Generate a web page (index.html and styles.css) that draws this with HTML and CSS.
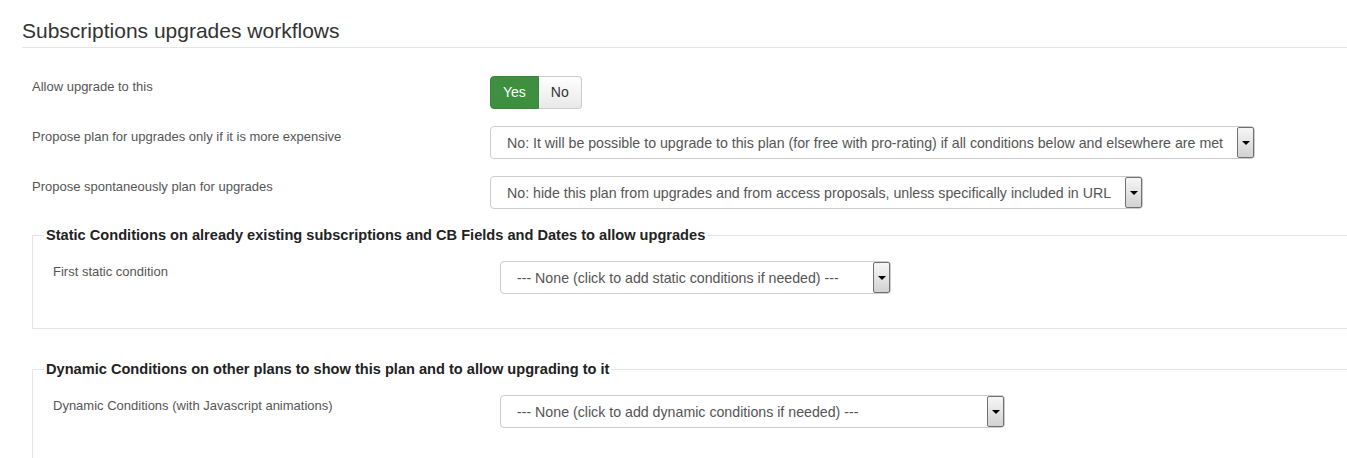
FILE: index.html
```html
<!DOCTYPE html>
<html>
<head>
<meta charset="utf-8">
<link rel="stylesheet" href="styles.css">
</head>
<body>
<div class="page">
  <h2 class="title">Subscriptions upgrades workflows</h2>
  <div class="form">
    <div class="row">
      <div class="label">Allow upgrade to this</div>
      <div class="toggle">
        <span class="btn btn-yes">Yes</span><span class="btn btn-no">No</span>
      </div>
    </div>
    <div class="row">
      <div class="label">Propose plan for upgrades only if it is more expensive</div>
      <div class="select select-expensive"><span class="select-text">No: It will be possible to upgrade to this plan (for free with pro-rating) if all conditions below and elsewhere are met</span><span class="select-arrow"></span></div>
    </div>
    <div class="row">
      <div class="label">Propose spontaneously plan for upgrades</div>
      <div class="select select-spontaneous"><span class="select-text">No: hide this plan from upgrades and from access proposals, unless specifically included in URL</span><span class="select-arrow"></span></div>
    </div>

    <fieldset class="group">
      <legend class="group-title">Static Conditions on already existing subscriptions and CB Fields and Dates to allow upgrades</legend>
      <div class="row row-inner">
        <div class="label label-inner">First static condition</div>
        <div class="select select-static"><span class="select-text">--- None (click to add static conditions if needed) ---</span><span class="select-arrow"></span></div>
      </div>
    </fieldset>

    <fieldset class="group group-second">
      <legend class="group-title">Dynamic Conditions on other plans to show this plan and to allow upgrading to it</legend>
      <div class="row row-inner">
        <div class="label label-inner">Dynamic Conditions (with Javascript animations)</div>
        <div class="select select-dynamic"><span class="select-text">--- None (click to add dynamic conditions if needed) ---</span><span class="select-arrow"></span></div>
      </div>
    </fieldset>
  </div>
</div>
</body>
</html>
```
FILE: styles.css
```css
html, body {
  margin: 0;
  padding: 0;
  background: #ffffff;
  overflow: hidden;
}

body {
  font-family: "Liberation Sans", Arial, Helvetica, sans-serif;
  color: #333333;
}

.page {
  padding: 20px 0 0 22px;
}

.title {
  margin: 0;
  font-size: 21px;
  font-weight: normal;
  line-height: 22px;
  padding-bottom: 5px;
  border-bottom: 1px solid #e5e5e5;
  color: #333333;
}

.form {
  padding-left: 10px;
  margin-top: 28px;
}

.row {
  display: flex;
  align-items: flex-start;
  margin-bottom: 17px;
}

.label {
  flex: none;
  width: 458px;
  font-size: 13px;
  line-height: 18px;
  padding-top: 2px;
  color: #555555;
}

.toggle {
  display: flex;
}

.btn {
  display: block;
  box-sizing: border-box;
  height: 33px;
  line-height: 31px;
  font-size: 14px;
  border: 1px solid #cccccc;
}

.btn-yes {
  padding: 0 12px;
  background: #3f8f40;
  border-color: #3a853b;
  color: #ffffff;
  border-radius: 4px 0 0 4px;
}

.btn-no {
  padding: 0 12px;
  background: linear-gradient(#ffffff, #e8e8e8);
  border-left: none;
  color: #333333;
  border-radius: 0 4px 4px 0;
}

.select {
  display: flex;
  align-items: center;
  box-sizing: border-box;
  height: 33px;
  border: 1px solid #cccccc;
  border-radius: 4px;
  padding-left: 16px;
  font-size: 14.2px;
  color: #555555;
  background: #ffffff;
}

.select-expensive {
  width: 765px;
}

.select-spontaneous {
  width: 653px;
}

.select-static {
  width: 391px;
}

.select-dynamic {
  width: 505px;
}

.select-text {
  flex: 1;
  min-width: 0;
  overflow: hidden;
  white-space: nowrap;
}

.select-arrow {
  flex: none;
  box-sizing: border-box;
  width: 17px;
  height: 31px;
  border: 1px solid #707070;
  border-radius: 2px;
  background: linear-gradient(#f6f6f6, #d2d2d2);
  display: flex;
  align-items: center;
  justify-content: center;
}

.select-arrow::after {
  content: "";
  width: 0;
  height: 0;
  border-left: 4px solid transparent;
  border-right: 4px solid transparent;
  border-top: 4px solid #000000;
}

.group {
  margin: 0;
  padding: 17px 0 34px 11px;
  border: 1px solid #e5e5e5;
  border-right: none;
  min-width: 0;
}

.group-second {
  margin-top: 31px;
}

.group-title {
  padding: 0 2px;
  font-size: 14.6px;
  font-weight: bold;
  line-height: 18px;
  color: #222222;
}

.row-inner {
  padding-left: 9px;
  margin-bottom: 0;
}

.label-inner {
  width: 447px;
}
```
